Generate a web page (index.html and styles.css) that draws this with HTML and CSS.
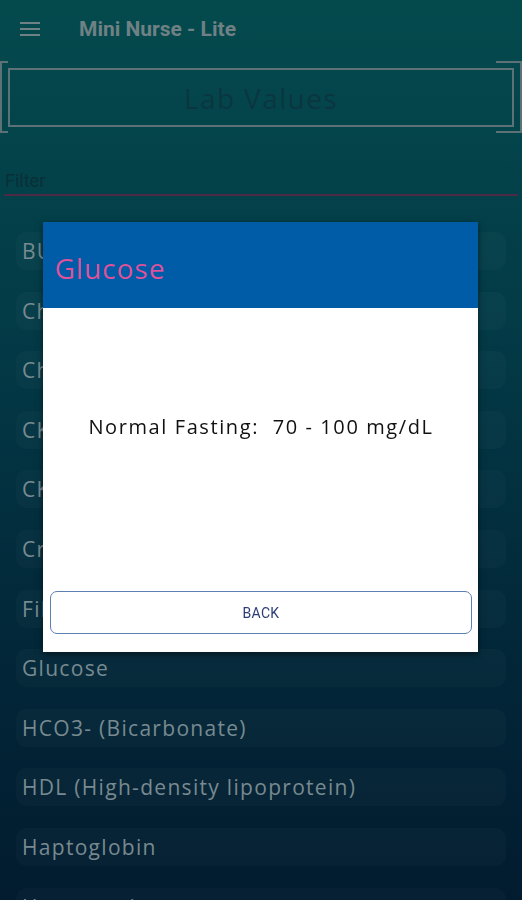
FILE: index.html
```html
<!DOCTYPE html>
<html>
<head>
  <title>Mini Nurse - Lite</title>
  <link rel="stylesheet" href="styles.css">
</head>
<body>
  <div class="app-bar">
    <svg class="menu" width="22" height="16" viewBox="0 0 22 16">
      <rect x="0" y="1" width="20" height="2" fill="#6f8184"></rect>
      <rect x="0" y="7" width="20" height="2" fill="#6f8184"></rect>
      <rect x="0" y="13" width="20" height="2" fill="#6f8184"></rect>
    </svg>
    <span class="app-title">Mini Nurse - Lite</span>
  </div>

  <div class="page-title">
    <div class="frame">Lab Values</div>
  </div>

  <div class="filter">Filter</div>

  <ul class="lab-list">
    <li>BUN</li>
    <li>Chloride</li>
    <li>Cholesterol</li>
    <li>CK (Creatine kinase)</li>
    <li>CK-MB</li>
    <li>Creatinine</li>
    <li>Fibrinogen</li>
    <li>Glucose</li>
    <li>HCO3- (Bicarbonate)</li>
    <li>HDL (High-density lipoprotein)</li>
    <li>Haptoglobin</li>
    <li>Hematocrit</li>
  </ul>

  <div class="overlay">
    <div class="dialog">
      <div class="dialog-head">Glucose</div>
      <div class="dialog-body">
        <p class="value">Normal Fasting:&nbsp; 70 - 100 mg/dL</p>
        <button type="button" class="back">BACK</button>
      </div>
    </div>
  </div>
</body>
</html>
```

FILE: styles.css
```css
html, body {
  height: 100%;
}

body {
  margin: 0;
  overflow: hidden;
  font-family: "Open Sans", Lato, sans-serif;
  background: linear-gradient(180deg, #044a4d 0%, #033b47 35%, #022a3b 65%, #021b2f 100%);
}

.app-bar {
  height: 58px;
  display: flex;
  align-items: center;
  padding-left: 20px;
}

.menu {
  margin-right: 37px;
}

.app-title {
  font-family: Roboto, sans-serif;
  font-weight: bold;
  font-size: 21px;
  color: #6f8184;
}

.page-title {
  margin: 3px 0 0;
  padding: 7px 8px 6px;
  position: relative;
}

.page-title::before,
.page-title::after {
  content: "";
  position: absolute;
  top: 0;
  bottom: 0;
  border: 2px solid #5d7277;
}

.page-title::before {
  left: 0;
  width: 6px;
  border-right: none;
}

.page-title::after {
  right: 0;
  width: 24px;
  border-left: none;
}

.frame {
  height: 55px;
  border: 2px solid #5d7277;
  display: flex;
  align-items: center;
  justify-content: center;
  font-size: 28px;
  color: #0b3640;
  letter-spacing: 1.4px;
}

.filter {
  margin: 37px 4px 0;
  padding: 0 1px 3px;
  font-family: Roboto, sans-serif;
  font-size: 18px;
  color: #0a2f38;
  border-bottom: 2px solid #4b2a45;
}

.lab-list {
  list-style: none;
  margin: 36px 0 0;
  padding: 0 16px;
  display: flex;
  flex-direction: column;
  gap: 21.6px;
}

.lab-list li {
  height: 38px;
  display: flex;
  align-items: center;
  padding-left: 6px;
  border-radius: 10px;
  background: rgba(255, 255, 255, 0.025);
  font-size: 21px;
  letter-spacing: 1.3px;
  color: #788a90;
}

.overlay {
  position: fixed;
  top: 0;
  left: 0;
  right: 0;
  bottom: 0;
  display: flex;
  justify-content: center;
  padding-top: 222px;
}

.dialog {
  width: 435px;
  height: 430px;
  margin-left: -1px;
  background: #fff;
  display: flex;
  flex-direction: column;
  box-shadow: 0 2px 6px rgba(0, 0, 0, 0.5);
}

.dialog-head {
  height: 86px;
  background: #005ca6;
  color: #e2529a;
  font-size: 28px;
  letter-spacing: 1px;
  display: flex;
  align-items: center;
  padding-left: 12px;
  padding-top: 5px;
  box-sizing: border-box;
}

.dialog-body {
  flex: 1;
  display: flex;
  flex-direction: column;
  padding: 0 6px 18px 7px;
}

.value {
  flex: 1;
  margin: 0;
  display: flex;
  align-items: center;
  justify-content: center;
  font-size: 20px;
  letter-spacing: 1.6px;
  color: #111;
  padding-bottom: 46px;
}

.back {
  height: 43px;
  border: 1.5px solid #5c80b2;
  border-radius: 7px;
  background: #fff;
  font-family: Roboto, sans-serif;
  font-size: 14px;
  color: #2b3c78;
  letter-spacing: 0.3px;
}
```
